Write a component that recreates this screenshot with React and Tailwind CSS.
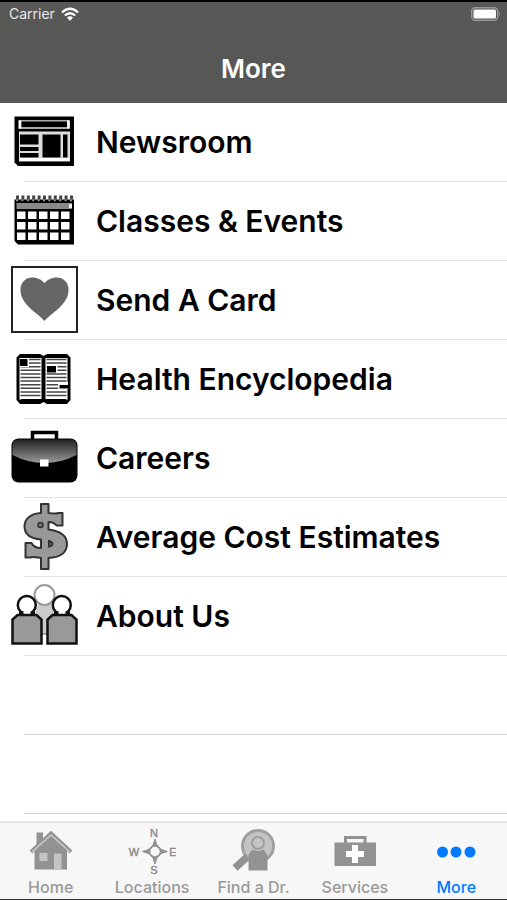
import clsx from 'clsx';

const STRIPES = [0, 1, 2, 3, 4, 5, 6, 7, 8, 9, 10];

function NewsIcon() {
  return (
    <svg viewBox="0 0 68 68" className="size-17" aria-hidden="true">
      <path d="M3.5 8.5H63V58H7l-3.5-3.5z" fill="#000" />
      <rect x="7.5" y="12" width="51" height="9" fill="#aaa" />
      <path d="M9 12.5v8M57.5 12.5v8" stroke="#fff" strokeWidth="2.5" />
      <rect x="10.5" y="13.5" width="45.500" height="5.5" fill="#000" />
      <rect x="8" y="23.5" width="51" height="30" fill="#ddd" />
      <rect x="8.5" y="50" width="50" height="3" fill="#fff" />
      <rect x="9" y="26.5" width="18.5" height="10" fill="#000" />
      <rect x="9" y="39" width="18.5" height="4" fill="#000" />
      <rect x="9" y="45" width="18.5" height="4.5" fill="#000" />
      <rect x="31.5" y="26.5" width="18" height="23" fill="#000" />
      <rect x="52" y="26.5" width="4.5" height="23" fill="#000" />
    </svg>
  );
}

function CalendarIcon() {
  return (
    <svg viewBox="0 0 68 68" className="size-17" aria-hidden="true">
      <path d="M3.5 12.500H63v45H7L3.5 54z" fill="#000" />
      <path d="M5 10.5h57" stroke="#444" strokeWidth="4" strokeDasharray="3 2.4" />
      <path d="M5 13.5h57" stroke="#999" strokeWidth="1.5" strokeDasharray="2 3.4" />
      <rect x="5.5" y="16" width="55.5" height="6" fill="#888" />
      <rect x="58" y="17" width="3" height="4" fill="#eee" />
      {[24.5, 35, 45.5].map(y =>
        [6, 17, 28, 39, 50].map(x => (
          <rect key={x + '-' + y} x={x} y={y} width="8.500" height="7.5" fill="#fff" />
        ))
      )}
    </svg>
  );
}

function HeartIcon() {
  return (
    <svg viewBox="0 0 68 68" className="size-17" aria-hidden="true">
      <rect x="1" y="1" width="65" height="65" fill="#fff" stroke="#222" strokeWidth="2" />
      <path
        d="M33.5 55C28 48 10 39 9.500 25 9 16 15 11.500 21 11.500c6 0 10 2.500 12.500 5.500 2.500-3 6.500-5.500 12.500-5.500 6 0 12 4.500 11.500 13.500C57 39 39 48 33.500 55z"
        fill="#666"
      />
    </svg>
  );
}

function BookIcon() {
  return (
    <svg viewBox="0 0 68 68" className="size-17" aria-hidden="true">
      <path d="M9 9h20l3.500 2L36 9h20l3.500 3.500V55L56 59H36l-3.500-2L29 59H9l-3.500-4V12.500z" fill="#000" />
      <path d="M8.500 13h22v41h-20l-2 1zM34.500 13h22v42l-2-1h-20z" fill="#fff" />
      {STRIPES.map(i => (
        <path key={i} d={`M9.500 ${14.5 + i * 3.6}h20M35.500 ${14.5 + i * 3.6}h20`} stroke="#444" strokeWidth="1.500" />
      ))}
      <path d="M9 13h9v9H9zM35.500 19h11v9h-11zM47 37h10v7H47z" fill="#fff" />
      <path d="M9 14h7.500v7H9zM36 21h9v6.500h-9zM48.500 40H57v3.500h-8.500z" fill="#000" />
    </svg>
  );
}

function BriefcaseIcon() {
  return (
    <svg viewBox="0 0 68 68" className="size-17" aria-hidden="true">
      <defs>
        <linearGradient id="gloss" x1="0" y1="0" x2="0" y2="1">
          <stop offset="0" stopColor="#222" />
          <stop offset="1" stopColor="#999" />
        </linearGradient>
      </defs>
      <path d="M21.500 16V8.500h24V16" fill="none" stroke="#000" strokeWidth="3.500" />
      <rect x="0.500" y="14.500" width="66" height="44" rx="7" fill="#000" />
      <path d="M1.500 31V21.500q0-6 6-6h52q6 0 6 6V31Q50 39 33.500 39T1.500 31z" fill="url(#gloss)" />
      <rect x="29" y="35.500" width="8.500" height="7" fill="#fff" />
    </svg>
  );
}

function DollarIcon() {
  return (
    <svg viewBox="0 0 68 68" className="size-17" aria-hidden="true">
      <path
        d="M30 1h7.500v9c4 0 7 1.500 10 0h4v12.500h-6C44 20.500 41 19 37.500 19v7.500C49 28 56 32 56 41s-7.500 13.500-18.500 14v11H30V55c-4-.5-8-2-11-.5h-4.500V40h6c1.500 3 5.500 5 9.500 5v-8.500C19 35.500 13.500 31.500 13.500 23.500S20 10.500 30 10z"
        fill="#999"
        stroke="#333"
        strokeWidth="2"
        strokeLinejoin="round"
      />
      <circle cx="29.500" cy="22" r="2.500" fill="#777" stroke="#333" strokeWidth="1.500" />
      <path d="M38 38v5.500q3.500-.5 3.500-2.500t-3.500-3z" fill="#777" stroke="#333" strokeWidth="2" />
    </svg>
  );
}

function PeopleIcon() {
  return (
    <svg viewBox="0 0 68 68" className="size-17" aria-hidden="true">
      <path d="M27 22h13l4 10v20H24V32z" fill="#ccc" />
      <path d="M31 52h5" stroke="#888" strokeWidth="1.500" />
      <circle cx="33.500" cy="13" r="10" fill="#fff" stroke="#999" strokeWidth="2" />
      {[0, 35].map(x => (
        <g key={x} transform={`translate(${x} 0)`}>
          <circle cx="15.800" cy="23" r="9" fill="#fff" stroke="#111" strokeWidth="2.500" />
          <path d="M12 28h8v5h-8z" fill="#fff" />
          <path d="M1.500 61.500v-24L6.500 33h19l5 4.500v24z" fill="#999" stroke="#111" strokeWidth="2.500" />
          <path d="M8 31h4.500M19.500 31H24" stroke="#111" strokeWidth="3.500" />
        </g>
      ))}
    </svg>
  );
}

function HomeIcon() {
  return (
    <svg viewBox="0 0 48 48" className="size-12" aria-hidden="true">
      <path d="M9.500 4.500H16V12L9.500 18zM24 7l16 15v19.500H7.500V22z" fill="#929292" />
      <path d="M4 24L24 5.500 44 24" fill="none" stroke="#929292" strokeWidth="4" />
      <path d="M5 24L24 7l19 17" fill="none" stroke="#ccc" strokeWidth="1.500" />
      <path d="M12.500 25h8v8h-8zM27 25.500h7.500v16H27z" fill="#c4c4c4" />
    </svg>
  );
}

function CompassIcon() {
  return (
    <svg viewBox="0 0 48 48" className="size-12" aria-hidden="true">
      <path d="M27 11l2 6 4.500 4.500 6 2-6 2L29 30l-2 6-2-6-4.500-4.500-6-2 6-2L25 17z" fill="#929292" stroke="#929292" />
      <circle cx="27" cy="23.500" r="5.500" fill="#f7f7f7" stroke="#929292" strokeWidth="1.500" />
      <g fill="#8a8a8a" fontFamily="Liberation Sans" fontSize="11" textAnchor="middle" stroke="#8a8a8a" strokeWidth="0.400">
        <text x="26" y="9">N</text>
        <text x="26" y="46">S</text>
        <text x="6" y="28">W</text>
        <text x="45" y="28">E</text>
      </g>
    </svg>
  );
}

function FindIcon() {
  return (
    <svg viewBox="0 0 48 48" className="size-12" aria-hidden="true">
      <circle cx="29" cy="18" r="15.500" fill="#c4c4c4" stroke="#a0a0a0" strokeWidth="3" />
      <path d="M6 40l12-11" stroke="#929292" strokeWidth="7.500" />
      <circle cx="29" cy="15" r="6" fill="#c4c4c4" stroke="#a0a0a0" strokeWidth="2" />
      <path d="M19.500 42.500V27l4-5.500q5.500 3 11 0l4 5.500v15.500z" fill="#929292" />
    </svg>
  );
}

function KitIcon() {
  return (
    <svg viewBox="0 0 48 48" className="size-12" aria-hidden="true">
      <path d="M14.500 15V9.500H34V15" fill="none" stroke="#929292" strokeWidth="3" />
      <path d="M3.500 14.500H45V38H3.500z" fill="#929292" />
      <path d="M24 17v18M15 26h18" stroke="#fff" strokeWidth="6" />
    </svg>
  );
}

function DotsIcon() {
  return (
    <svg viewBox="0 0 48 48" className="size-12" fill="#007aff" aria-hidden="true">
      <circle cx="10.500" cy="24" r="5.500" />
      <circle cx="24" cy="24" r="5.500" />
      <circle cx="38" cy="24" r="5.500" />
    </svg>
  );
}

const items = [
  { label: 'Newsroom', Icon: NewsIcon },
  { label: 'Classes & Events', Icon: CalendarIcon },
  { label: 'Send A Card', Icon: HeartIcon },
  { label: 'Health Encyclopedia', Icon: BookIcon },
  { label: 'Careers', Icon: BriefcaseIcon },
  { label: 'Average Cost Estimates', Icon: DollarIcon },
  { label: 'About Us', Icon: PeopleIcon },
];

const tabs = [
  { label: 'Home', Icon: HomeIcon },
  { label: 'Locations', Icon: CompassIcon },
  { label: 'Find a Dr.', Icon: FindIcon },
  { label: 'Services', Icon: KitIcon },
  { label: 'More', Icon: DotsIcon, active: true },
];

function StatusBar() {
  return (
    <div className="flex h-6 items-center justify-between pr-1.5 pl-[9px]">
      <div className="flex items-center gap-1.5 text-sm text-gray-200">
        Carrier
        <svg viewBox="0 0 18 14" className="h-3.5 w-4.5" aria-hidden="true">
          <path d="M1 5.500Q9-2 17 5.500M3.800 8.500q5.200-4.500 10.400 0" fill="none" stroke="#fff" strokeWidth="2.200" />
          <path d="M6 10.500q3-2.500 6 0L9 14z" fill="#fff" />
        </svg>
      </div>
      <svg viewBox="0 0 30 14" className="h-3.5 w-7.5" aria-hidden="true">
        <rect x="0.700" y="0.700" width="26" height="12.600" rx="3.500" fill="none" stroke="#999" strokeWidth="1.400" />
        <rect x="2.500" y="2.500" width="22.500" height="9" rx="1.500" fill="#fff" />
        <path d="M28 5q2 2 0 4z" fill="#999" />
      </svg>
    </div>
  );
}

export default function App() {
  return (
    <div className="flex min-h-screen flex-col border-b border-[#333] bg-white font-['Inter',sans-serif]">
      <header className="border-t-2 border-black bg-[#575755] text-white">
        <StatusBar />
        <h1 className="flex h-[77px] items-center justify-center pt-2 text-[26px] font-semibold">More</h1>
      </header>

      <main className="flex-1">
        <ul>
          {items.map(({ label, Icon }) => (
            <li key={label}>
              <a href="#" className="flex h-[78px] items-center gap-[17px] pl-[11px] text-[30px] font-semibold text-black">
                <Icon />
                {label}
              </a>
              <div className="ml-6 h-px bg-[#e2e2e2]" />
            </li>
          ))}
        </ul>
        {/* empty rows */}
        <div className="ml-6 h-[79px] border-b border-[#d2d2d2]" />
        <div className="ml-6 h-[79px] border-b border-[#d2d2d2]" />
      </main>

      <nav className="grid grid-cols-5 border-t-2 border-[#e4e4e4] bg-[#f7f7f7] pt-[5px]">
        {tabs.map(({ label, Icon, active }) => (
          <a
            key={label}
            href="#"
            className={clsx(
              'flex flex-col items-center text-base leading-[23px] font-medium',
              active ? 'text-[#007aff]' : 'text-[#999]'
            )}
          >
            <Icon />
            {label}
          </a>
        ))}
      </nav>
    </div>
  );
}
